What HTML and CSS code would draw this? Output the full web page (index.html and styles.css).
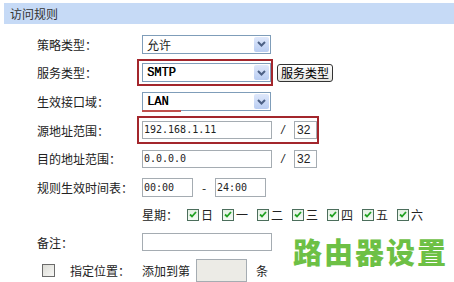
FILE: index.html
```html
<!DOCTYPE html>
<html lang="zh-CN">
<head>
    <meta charset="UTF-8">
    <title>访问规则</title>
    <link rel="stylesheet" href="styles.css">
</head>
<body>
    <div class="panel">
        <div class="title">访问规则</div>

        <div class="form">
            <div class="label">策略类型：</div>
            <div class="field">
                <div class="select"><span class="value">允许</span><span class="arrow"><svg width="9" height="6" viewBox="0 0 9 6"><path d="M1 1 L4.5 4.5 L8 1" fill="none" stroke="#4d6185" stroke-width="2"/></svg></span></div>
            </div>

            <div class="label">服务类型：</div>
            <div class="field">
                <div class="mark">
                    <div class="select"><span class="value latin">SMTP</span><span class="arrow"><svg width="9" height="6" viewBox="0 0 9 6"><path d="M1 1 L4.5 4.5 L8 1" fill="none" stroke="#4d6185" stroke-width="2"/></svg></span></div>
                </div>
                <button class="btn" type="button">服务类型</button>
            </div>

            <div class="label">生效接口域：</div>
            <div class="field">
                <div class="select"><span class="value latin">LAN</span><span class="arrow"><svg width="9" height="6" viewBox="0 0 9 6"><path d="M1 1 L4.5 4.5 L8 1" fill="none" stroke="#4d6185" stroke-width="2"/></svg></span><span class="underline"></span></div>
            </div>

            <div class="label">源地址范围：</div>
            <div class="field">
                <div class="mark mark-wide">
                    <div class="input ip">192.168.1.11</div>
                    <span class="slash">/</span>
                    <div class="input mask">32</div>
                </div>
            </div>

            <div class="label">目的地址范围：</div>
            <div class="field">
                <div class="input ip">0.0.0.0</div>
                <span class="slash">/</span>
                <div class="input mask">32</div>
            </div>

            <div class="label">规则生效时间表：</div>
            <div class="field">
                <div class="input ip time">00:00</div>
                <span class="dash">-</span>
                <div class="input ip time">24:00</div>
            </div>

            <div class="label"></div>
            <div class="field days">
                <span class="week">星期：</span>
                <label class="day"><span class="check"><svg width="8" height="7" viewBox="0 0 8 7"><path d="M1 3.5 L3 5.5 L7 1" fill="none" stroke="#21a121" stroke-width="1.8"/></svg></span>日</label>
                <label class="day"><span class="check"><svg width="8" height="7" viewBox="0 0 8 7"><path d="M1 3.5 L3 5.5 L7 1" fill="none" stroke="#21a121" stroke-width="1.8"/></svg></span>一</label>
                <label class="day"><span class="check"><svg width="8" height="7" viewBox="0 0 8 7"><path d="M1 3.5 L3 5.5 L7 1" fill="none" stroke="#21a121" stroke-width="1.8"/></svg></span>二</label>
                <label class="day"><span class="check"><svg width="8" height="7" viewBox="0 0 8 7"><path d="M1 3.5 L3 5.5 L7 1" fill="none" stroke="#21a121" stroke-width="1.8"/></svg></span>三</label>
                <label class="day"><span class="check"><svg width="8" height="7" viewBox="0 0 8 7"><path d="M1 3.5 L3 5.5 L7 1" fill="none" stroke="#21a121" stroke-width="1.8"/></svg></span>四</label>
                <label class="day"><span class="check"><svg width="8" height="7" viewBox="0 0 8 7"><path d="M1 3.5 L3 5.5 L7 1" fill="none" stroke="#21a121" stroke-width="1.8"/></svg></span>五</label>
                <label class="day"><span class="check"><svg width="8" height="7" viewBox="0 0 8 7"><path d="M1 3.5 L3 5.5 L7 1" fill="none" stroke="#21a121" stroke-width="1.8"/></svg></span>六</label>
            </div>

            <div class="label">备注：</div>
            <div class="field">
                <div class="input note"></div>
            </div>

            <div class="label position">
                <span class="box"></span>
                <span>指定位置：</span>
            </div>
            <div class="field">
                <span>添加到第</span>
                <div class="input order"></div>
                <span class="unit">条</span>
            </div>
        </div>

        <div class="watermark">路由器设置</div>
    </div>
</body>
</html>
```

FILE: styles.css
```css
body {
    margin: 0;
    padding: 3px 0 0 4px;
    background-color: #fff;
    font-family: "Noto Sans CJK SC", sans-serif;
    font-size: 12px;
    color: #222;
    overflow: hidden;
}
.panel {
    position: relative;
}
.title {
    height: 21px;
    line-height: 21px;
    padding-left: 6px;
    background-color: #c6daf6;
    color: #333;
}
.form {
    display: grid;
    grid-template-columns: 105px auto;
    grid-template-rows: 28px 29px 29px 28px 29px 28px 27px 28px 29px;
    margin-top: 6px;
    padding-left: 33px;
}
.label {
    display: flex;
    align-items: center;
}
.field {
    display: flex;
    align-items: center;
}
.select {
    position: relative;
    display: flex;
    align-items: center;
    justify-content: space-between;
    box-sizing: border-box;
    width: 129px;
    height: 19px;
    border: 1px solid #7f9db9;
    background-color: #fff;
}
.value {
    padding-left: 4px;
}
.latin {
    font-family: "Liberation Mono", monospace;
    font-size: 12px;
    color: #000;
    text-shadow: 0.4px 0 0 #000;
}
.arrow {
    display: flex;
    align-items: center;
    justify-content: center;
    width: 15px;
    height: 15px;
    margin-right: 1px;
    border-radius: 2px;
    background: linear-gradient(#dfe8fb, #b9cdf2);
}
.underline {
    position: absolute;
    left: -1px;
    bottom: -2px;
    width: 39px;
    height: 2px;
    background-color: #c0504d;
}
.mark {
    display: flex;
    align-items: center;
    margin-left: -5px;
    padding: 2px 0 2px 3px;
    border: 2px solid #a3262c;
}
.mark-wide {
    padding: 3px 0 3px 3px;
}
.btn {
    height: 18px;
    margin-left: 4px;
    padding: 0 3px;
    border: 1px solid #333;
    border-radius: 3px;
    background: linear-gradient(#ffffff, #e4e4e0);
    font-family: "Noto Sans CJK SC", sans-serif;
    font-size: 12px;
    line-height: 16px;
    color: #000;
}
.input {
    box-sizing: border-box;
    height: 18px;
    border: 1px solid #a5acb2;
    background-color: #fff;
    line-height: 16px;
    padding-left: 1px;
}
.ip {
    width: 130px;
    font-family: "DejaVu Sans Mono", monospace;
    font-size: 10px;
}
.time {
    width: 51px;
    height: 19px;
    line-height: 17px;
}
.mask {
    width: 23px;
    font-family: "Liberation Sans", sans-serif;
    font-size: 12px;
    padding-left: 2px;
}
.slash {
    width: 22px;
    text-align: center;
    font-family: "Liberation Sans", sans-serif;
    font-style: italic;
}
.dash {
    width: 22px;
    text-align: center;
}
.days .week {
    width: 45px;
}
.day {
    display: flex;
    align-items: center;
    width: 35px;
}
.check {
    display: flex;
    align-items: center;
    justify-content: center;
    box-sizing: border-box;
    width: 12px;
    height: 12px;
    margin-right: 2px;
    border: 1px solid #4c6e5c;
    background: linear-gradient(#e3f0e3, #f4faf4);
}
.note {
    width: 130px;
}
.position {
    margin-left: 5px;
}
.box {
    box-sizing: border-box;
    width: 13px;
    height: 13px;
    margin-right: 15px;
    border: 1px solid #6b6b6b;
    background: linear-gradient(135deg, #dcdcd6, #f7f7f5);
}
.order {
    width: 51px;
    height: 23px;
    margin-left: 6px;
    background-color: #ecebe6;
}
.unit {
    margin-left: 9px;
}
.watermark {
    position: absolute;
    left: 289px;
    top: 227px;
    font-family: "Noto Sans CJK SC", sans-serif;
    font-size: 29px;
    font-weight: 900;
    letter-spacing: 2px;
    color: #6dc045;
}
```
